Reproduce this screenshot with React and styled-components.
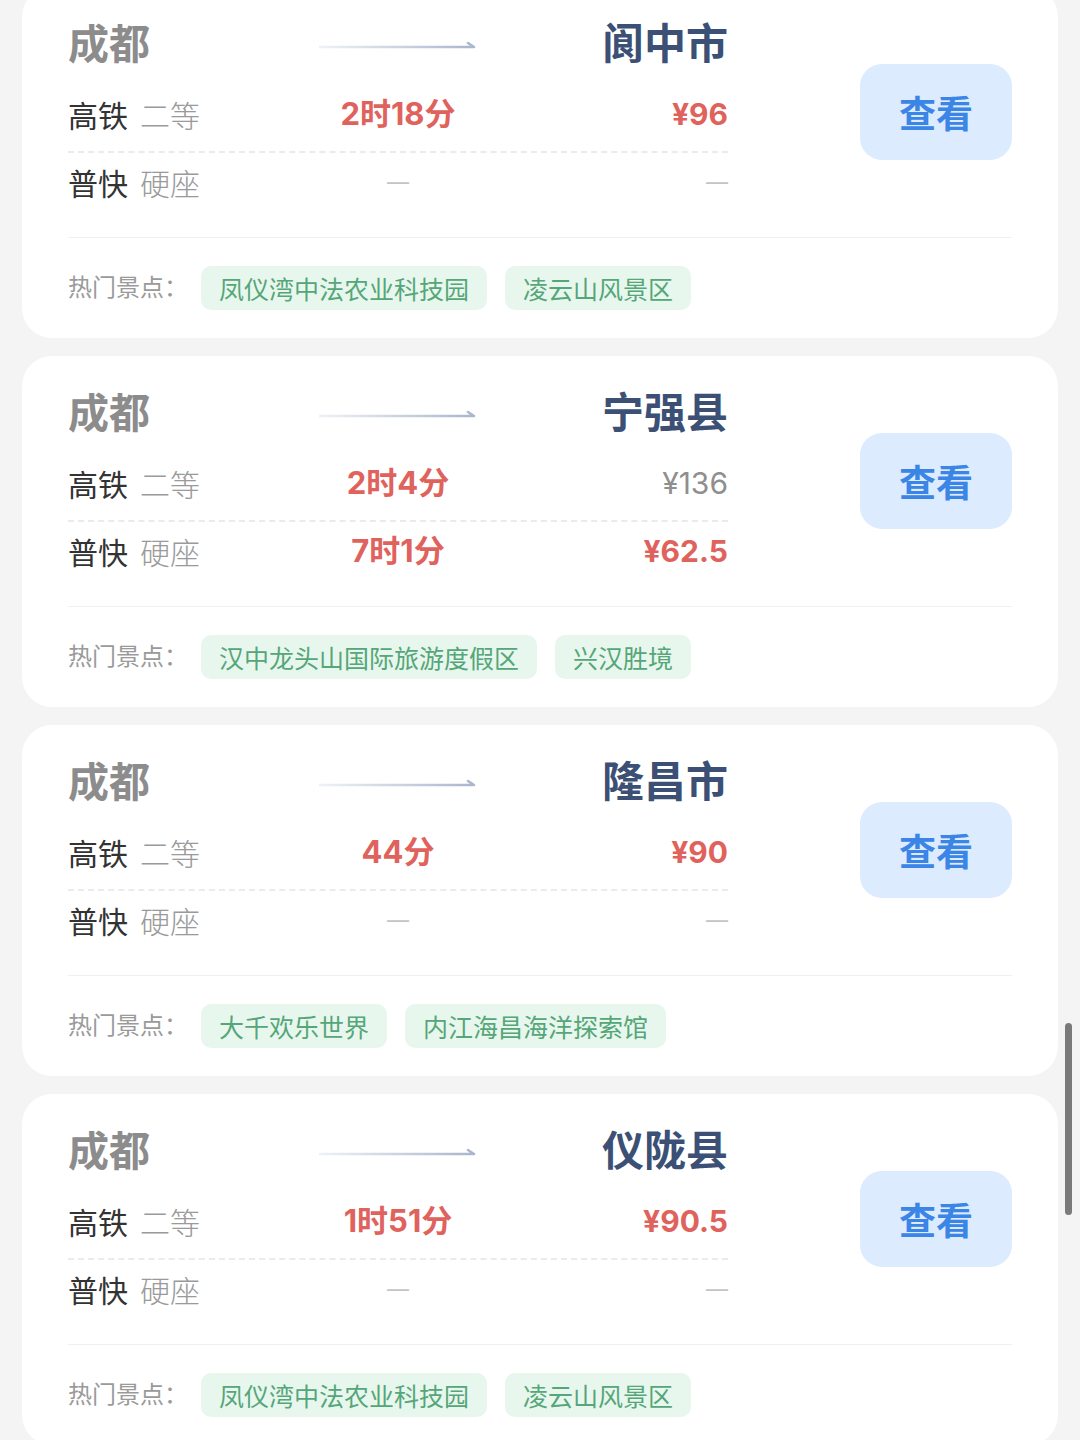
import React from 'react'
import styled, { createGlobalStyle } from 'styled-components'

const GlobalStyle = createGlobalStyle`
  html, body {
    margin: 0;
    padding: 0;
    background: #f4f4f5;
    font-family: Inter, "Noto Sans CJK SC", sans-serif;
  }
`

const routes = [
  {
    to: '阆中市',
    rows: [
      { type: '高铁', seat: '二等', time: '2时18分', price: '¥96', best: true },
      { type: '普快', seat: '硬座' },
    ],
    spots: ['凤仪湾中法农业科技园', '凌云山风景区'],
  },
  {
    to: '宁强县',
    rows: [
      { type: '高铁', seat: '二等', time: '2时4分', price: '¥136', best: false },
      { type: '普快', seat: '硬座', time: '7时1分', price: '¥62.5', best: true },
    ],
    spots: ['汉中龙头山国际旅游度假区', '兴汉胜境'],
  },
  {
    to: '隆昌市',
    rows: [
      { type: '高铁', seat: '二等', time: '44分', price: '¥90', best: true },
      { type: '普快', seat: '硬座' },
    ],
    spots: ['大千欢乐世界', '内江海昌海洋探索馆'],
  },
  {
    to: '仪陇县',
    rows: [
      { type: '高铁', seat: '二等', time: '1时51分', price: '¥90.5', best: true },
      { type: '普快', seat: '硬座' },
    ],
    spots: ['凤仪湾中法农业科技园', '凌云山风景区'],
  },
]

const Page = styled.div`
  padding: 0 22px;
  height: 1440px;
  overflow: hidden;
`

const List = styled.div`
  margin-top: -13px;
  display: flex;
  flex-direction: column;
  gap: 18px;
`

const Card = styled.div`
  background: #fff;
  border-radius: 30px;
  padding: 0 46px;
`

const Top = styled.div`
  display: flex;
  justify-content: space-between;
  padding: 27px 0 26px;
  border-bottom: 1px solid #f0f0f2;
`

const Info = styled.div`
  width: 660px;
`

const Grid = styled.div`
  display: grid;
  grid-template-columns: 1fr 1fr 1fr;
  align-items: center;
  height: ${(p) => p.$h}px;
  margin-top: ${(p) => p.$mt || 0}px;
  border-bottom: ${(p) => (p.$dashed ? '2px dashed #e8ebf0' : 'none')};
`

const From = styled.div`
  font-family: "Noto Sans CJK SC", sans-serif;
  font-size: 41px;
  font-weight: 700;
  color: #8c8c8c;
  line-height: 54px;
`

const To = styled(From)`
  font-size: 42px;
  color: #3c5075;
  text-align: right;
`

const ArrowBox = styled.div`
  display: flex;
  justify-content: center;
  padding-top: 8px;
`

const Label = styled.div`
  font-family: "Noto Sans CJK SC", sans-serif;
  font-size: 30px;
  color: #333;
  line-height: 40px;
`

const Seat = styled.span`
  color: #9a9a9a;
  font-weight: 300;
  margin-left: 12px;
`

const Time = styled.div`
  text-align: center;
  font-size: 31px;
  font-weight: 700;
  color: #e0625c;
  line-height: 40px;
`

const Price = styled.div`
  text-align: right;
  font-size: 30px;
  font-weight: ${(p) => (p.$best ? 700 : 400)};
  color: ${(p) => (p.$best ? '#e0625c' : '#8f8f8f')};
  line-height: 40px;
`

const Dash = styled.div`
  text-align: ${(p) => p.$align};
  font-size: 22px;
  color: #c4c4c4;
  line-height: 40px;
`

const ViewButton = styled.button`
  align-self: flex-start;
  margin-top: 50px;
  width: 152px;
  height: 96px;
  border: none;
  border-radius: 22px;
  background: #dcebfd;
  color: #3a85e6;
  font-family: "Noto Sans CJK SC", sans-serif;
  font-size: 37px;
  font-weight: 700;
  cursor: pointer;
`

const Spots = styled.div`
  display: flex;
  align-items: center;
  padding: 28px 0 28px;
`

const SpotLabel = styled.span`
  font-family: "Noto Sans CJK SC", sans-serif;
  font-size: 24px;
  color: #9a9a9a;
  margin-right: 13px;
  margin-top: -6px;
`

const Tag = styled.span`
  display: inline-flex;
  align-items: center;
  height: 44px;
  padding: 0 18px;
  margin-right: 18px;
  border-radius: 10px;
  background: #e8f7ee;
  color: #55a678;
  font-family: "Noto Sans CJK SC", sans-serif;
  font-size: 25px;
`

const ScrollThumb = styled.div`
  position: fixed;
  right: 8px;
  top: 1023px;
  width: 7px;
  height: 192px;
  border-radius: 4px;
  background: #7a7a7a;
`

const Arrow = () => (
  <svg width="158" height="10" viewBox="0 0 158 10">
    <defs>
      <linearGradient id="ar" x1="0" x2="1" y1="0" y2="0">
        <stop offset="0" stopColor="#eef1f6" />
        <stop offset="1" stopColor="#aab6cc" />
      </linearGradient>
    </defs>
    <path d="M1 7 H155 L149 3" fill="none" stroke="url(#ar)" strokeWidth="2.6" strokeLinecap="round" strokeLinejoin="round" />
  </svg>
)

const RouteRow = ({ row, dashed, h, mt }) => (
  <Grid $h={h} $mt={mt} $dashed={dashed}>
    <Label>
      {row.type}
      <Seat>{row.seat}</Seat>
    </Label>
    {row.time ? <Time>{row.time}</Time> : <Dash $align="center">—</Dash>}
    {row.price ? <Price $best={row.best}>{row.price}</Price> : <Dash $align="right">—</Dash>}
  </Grid>
)

const RouteCard = ({ route }) => (
  <Card>
    <Top>
      <Info>
        <Grid $h={54}>
          <From>成都</From>
          <ArrowBox>
            <Arrow />
          </ArrowBox>
          <To>{route.to}</To>
        </Grid>
        <RouteRow row={route.rows[0]} dashed h={74} mt={9} />
        <RouteRow row={route.rows[1]} h={58} />
      </Info>
      <ViewButton>查看</ViewButton>
    </Top>
    <Spots>
      <SpotLabel>热门景点：</SpotLabel>
      {route.spots.map((s) => (
        <Tag key={s}>{s}</Tag>
      ))}
    </Spots>
  </Card>
)

export default function App() {
  return (
    <Page>
      <GlobalStyle />
      <List>
        {routes.map((r, i) => (
          <RouteCard key={i} route={r} />
        ))}
      </List>
      <ScrollThumb />
    </Page>
  )
}
